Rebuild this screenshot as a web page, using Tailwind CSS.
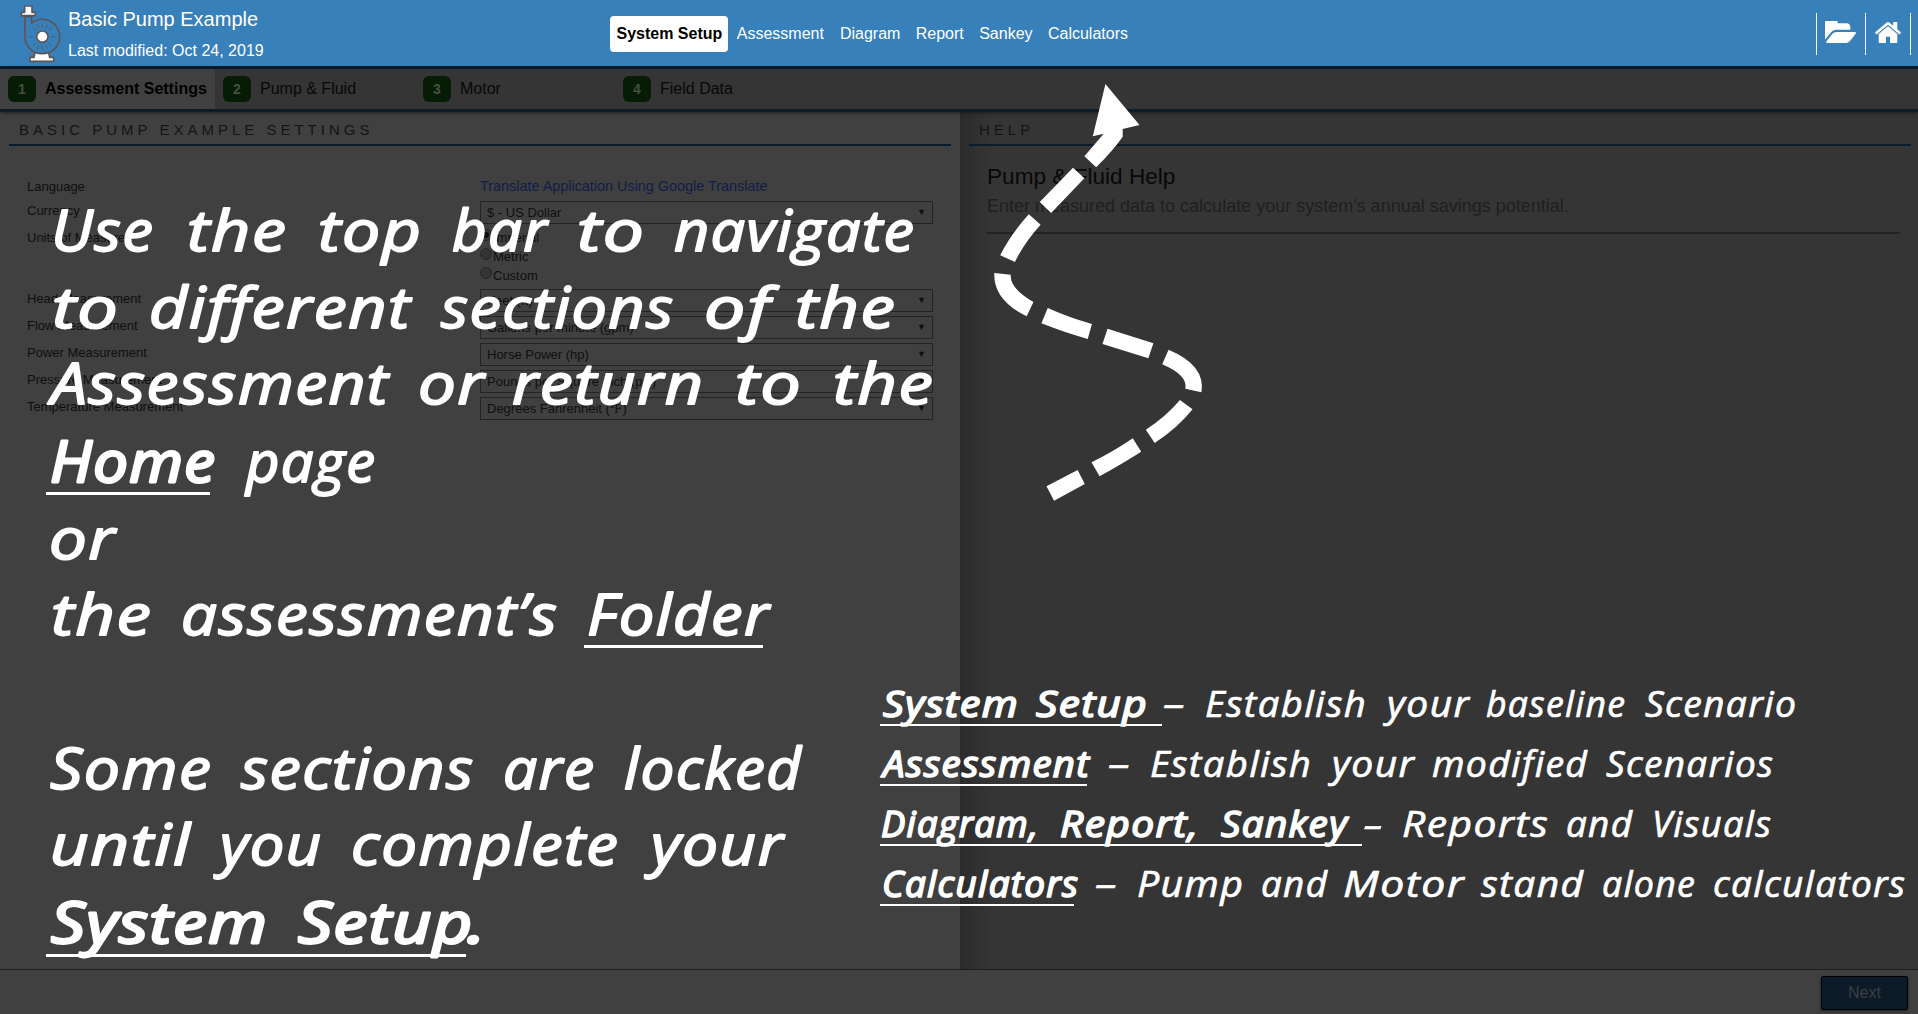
<!DOCTYPE html>
<html lang="en">
<head>
<meta charset="utf-8">
<title>Basic Pump Example</title>
<script src="https://cdn.jsdelivr.net/npm/@tailwindcss/browser@4"></script>
</head>
<body class="bg-[#404040] overflow-hidden">
<div class="relative flex h-[1014px] w-[1918px] flex-col overflow-hidden font-['Liberation_Sans',Arial,sans-serif] text-black">

  <!-- Top bar -->
  <header class="flex h-[69px] shrink-0 border-b-[3px] border-[#0d1c29] bg-[#3880b9] text-white">
    <div class="flex w-[610px] pl-[20px] pt-[4px]">
      <svg class="h-[59px] w-[42px]" viewBox="60 12 126 177" fill="none" stroke="#5b5557" stroke-width="5" stroke-linejoin="round">
        <path d="M75 50V108A52 52 0 1 0 95 69V50Z"/>
        <path fill="#fff" d="M74 18H96V37H106V47H64V37H74Z"/>
        <path fill="#fff" d="M105 158Q127 164 146 158L149 172H161V184H90V172H102Z"/>
        <circle cx="127" cy="110" r="17" fill="#fff"/>
        <path stroke-width="2.5" d="M127 72V84M127 137V149M88 110H100M153 110H165M99 82L108 91M146 129L155 138M155 82L146 91M108 129L99 138M112 74L116 85M142 74L138 85M112 146L116 135M142 146L138 135"/>
      </svg>
      <div class="flex flex-col pl-[6px]">
        <div class="text-[20px] leading-[30px]">Basic Pump Example</div>
        <div class="pt-[7px] text-[16px] leading-[20px]">Last modified: Oct 24, 2019</div>
      </div>
    </div>
    <nav class="mt-[16px] flex h-[36px] gap-px text-[16px] leading-[23px] whitespace-nowrap">
      <div class="w-[118px] rounded-[4px] bg-white pl-[6.5px] pt-[6px] font-bold text-black">System Setup</div>
      <div class="px-[7.8px] pt-[6px]">Assessment</div>
      <div class="px-[7.2px] pt-[6px]">Diagram</div>
      <div class="px-[7.2px] pt-[6px]">Report</div>
      <div class="px-[7.2px] pt-[6px]">Sankey</div>
      <div class="px-[7.2px] pt-[6px]">Calculators</div>
    </nav>
    <div class="mt-[13px] mr-[7px] ml-auto flex h-[42px] border-r border-white">
      <div class="w-[49px] border-l border-white pt-[8px] pl-[8px]">
        <svg class="h-[22px] w-[31px]" viewBox="0 256 1880 1280" preserveAspectRatio="none" fill="#fff"><path d="M1879 952q0 31-31 66l-336 396q-43 51-120.5 86.5t-143.5 35.5h-1088q-34 0-60.5-13t-26.5-43q0-31 31-66l336-396q43-51 120.5-86.5t143.5-35.5h1088q34 0 60.5 13t26.5 43zm-343-344v160h-832q-94 0-197 47.5t-164 119.5l-337 396-5 6q0-4-.5-12.5t-.5-12.5v-960q0-92 66-158t158-66h320q92 0 158 66t66 158v32h544q92 0 158 66t66 158z"/></svg>
      </div>
      <div class="w-[45px] border-l border-white pt-[9px] pl-[9px]">
        <svg class="h-[21px] w-[26px]" viewBox="89 253 1614 1283" preserveAspectRatio="none" fill="#fff"><path d="M1472 992v480q0 26-19 45t-45 19h-384v-384h-256v384h-384q-26 0-45-19t-19-45v-480q0-1 .5-3t.5-3l575-474 575 474q1 2 1 6zm223-69l-62 74q-8 9-21 11h-3q-13 0-21-7l-692-577-692 577q-12 8-24 7-13-2-21-11l-62-74q-8-10-7-23.5t11-21.5l719-599q32-26 76-26t76 26l244 204v-195q0-14 9-23t23-9h192q14 0 23 9t9 23v408l219 182q10 8 11 21.5t-7 23.5z"/></svg>
      </div>
    </div>
  </header>

  <!-- Setup steps -->
  <div class="z-10 flex h-[43px] shrink-0 border-b-[3px] border-[#0d1c29] bg-[#353535] text-[16px] leading-[40px] text-[#080808] shadow-[0_1px_4px_rgba(0,0,0,0.5)]">
    <div class="flex w-[215px] bg-[#404040] pl-[8px] font-bold text-black"><div class="mt-[7px] mr-[9px] h-[26px] w-[28px] rounded-[6px] bg-[#061c05] text-center text-[14px] leading-[27px] font-bold text-[#46503f]">1</div><div>Assessment Settings</div></div>
    <div class="flex w-[200px] pl-[8px]"><div class="mt-[7px] mr-[9px] h-[26px] w-[28px] rounded-[6px] bg-[#061c05] text-center text-[14px] leading-[27px] font-bold text-[#46503f]">2</div><div>Pump &amp; Fluid</div></div>
    <div class="flex w-[200px] pl-[8px]"><div class="mt-[7px] mr-[9px] h-[26px] w-[28px] rounded-[6px] bg-[#061c05] text-center text-[14px] leading-[27px] font-bold text-[#46503f]">3</div><div>Motor</div></div>
    <div class="flex w-[200px] pl-[8px]"><div class="mt-[7px] mr-[9px] h-[26px] w-[28px] rounded-[6px] bg-[#061c05] text-center text-[14px] leading-[27px] font-bold text-[#46503f]">4</div><div>Field Data</div></div>
  </div>

  <!-- Panels -->
  <main class="flex min-h-0 flex-1">
    <section class="w-[960px] bg-[#404040] pl-[9px]">
      <div class="h-[34px] w-[942px] border-b-2 border-[#0d1c29] pl-[10px] pt-[8px] text-[15px] leading-[20px] tracking-[4px] text-[#151515]">BASIC PUMP EXAMPLE SETTINGS</div>
      <div class="flex flex-col pl-[18px] pt-[28px] text-[13px] leading-[15px] text-[#0f0f0f]">
        <div class="flex h-[25px]"><div class="w-[453px] pt-[5px]">Language</div><div class="pt-[5px] text-[14.4px] text-[#101e4a]">Translate Application Using Google Translate</div></div>
        <div class="flex h-[27px] pt-[2px]"><div class="w-[453px] pt-[2px]">Currency</div><div class="flex h-[23px] w-[453px] justify-between border border-[#242424] pt-[3px] pr-[6px] pl-[6px]">$ - US Dollar<span class="text-[9px]">▼</span></div></div>
        <div class="flex h-[61px]"><div class="w-[453px] pt-[4px]">Units of Measure</div>
          <div class="flex flex-col pt-[2px] leading-[19px]">
            <div class="flex h-[19px] gap-px"><span class="mt-[1px] flex size-[12px] items-center justify-center rounded-full border border-[#262626] bg-[#383838]"><span class="size-[6px] rounded-full bg-[#0c0c0c]"></span></span>Imperial</div>
            <div class="flex h-[19px] gap-px"><span class="mt-[1px] size-[12px] rounded-full border border-[#262626] bg-[#343434]"></span>Metric</div>
            <div class="flex h-[19px] gap-px"><span class="mt-[1px] size-[12px] rounded-full border border-[#262626] bg-[#343434]"></span>Custom</div>
          </div></div>
        <div class="flex h-[27px] pt-[2px]"><div class="w-[453px] pt-[2px]">Head Measurement</div><div class="flex h-[23px] w-[453px] justify-between border border-[#242424] pt-[3px] pr-[6px] pl-[6px]">Feet (ft)<span class="text-[9px]">▼</span></div></div>
        <div class="flex h-[27px] pt-[2px]"><div class="w-[453px] pt-[2px]">Flow Measurement</div><div class="flex h-[23px] w-[453px] justify-between border border-[#242424] pt-[3px] pr-[6px] pl-[6px]">Gallons per minute (gpm)<span class="text-[9px]">▼</span></div></div>
        <div class="flex h-[27px] pt-[2px]"><div class="w-[453px] pt-[2px]">Power Measurement</div><div class="flex h-[23px] w-[453px] justify-between border border-[#242424] pt-[3px] pr-[6px] pl-[6px]">Horse Power (hp)<span class="text-[9px]">▼</span></div></div>
        <div class="flex h-[27px] pt-[2px]"><div class="w-[453px] pt-[2px]">Pressure Measurement</div><div class="flex h-[23px] w-[453px] justify-between border border-[#242424] pt-[3px] pr-[6px] pl-[6px]">Pounds per Square Inch (psi)<span class="text-[9px]">▼</span></div></div>
        <div class="flex h-[27px] pt-[2px]"><div class="w-[453px] pt-[2px]">Temperature Measurement</div><div class="flex h-[23px] w-[453px] justify-between border border-[#242424] pt-[3px] pr-[6px] pl-[6px]"><span>Degrees Fahrenheit (<span class="font-['DejaVu_Serif','Liberation_Serif',serif] text-[12px]">℉</span>)</span><span class="text-[9px]">▼</span></div></div>
      </div>
    </section>
    <section class="w-[958px] bg-[#353535] bg-linear-to-r from-[#2b2b2b] from-0% via-[#303030] via-[1.5%] to-[#353535] to-[3.5%] pl-[9px]">
      <div class="h-[34px] w-[942px] border-b-2 border-[#0d1c29] pl-[10px] pt-[8px] text-[15px] leading-[20px] tracking-[4px] text-[#151515]">HELP</div>
      <div class="pl-[18px]">
        <div class="pt-[17px] text-[22.6px] leading-[28px] text-[#080808]">Pump &amp; Fluid Help</div>
        <div class="w-[913px] border-b-2 border-[#222] pb-[15px] pt-[4px] text-[18px] leading-[22px] text-[#1e2021]">Enter measured data to calculate your system's annual savings potential.</div>
      </div>
    </section>
  </main>

  <!-- Footer -->
  <footer class="flex h-[45px] shrink-0 justify-end border-t border-[#1c1c1c] bg-[#404040] pr-[10px] pt-[6px]">
    <div class="h-[34px] w-[87px] rounded-[2px] border border-black bg-[#0d1a27] text-center text-[16px] leading-[31px] text-[#3c4043] shadow-[0_1px_3px_rgba(0,0,0,0.5)]">Next</div>
  </footer>

  <!-- Dashed arrow -->
  <svg class="absolute left-[940px] top-[70px] z-20 h-[440px] w-[660px]" viewBox="0 0 1568 1320" preserveAspectRatio="none" fill="#fff">
    <path d="M393 42L474 165L434 177V200Q412 240 371 292L343 259L389 191L363 199Z"/>
    <path d="M316 293L343 325L264 429L237 396Z"/>
    <path d="M211 433L239 464Q200 518 178 576L143 556Q166 496 211 433Z"/>
    <path d="M129 609L168 614Q166 656 222 696L206 739Q126 689 129 609Z"/>
    <path d="M256 714Q305 742 361 762L351 807Q292 786 241 760Z"/>
    <path d="M398 776L507 820L495 865L386 822Z"/>
    <path d="M543 839Q632 886 621 967L583 956Q589 916 528 883Z"/>
    <path d="M570 990L600 1018Q564 1075 510 1119L489 1079Q536 1041 570 990Z"/>
    <path d="M458 1105L478 1145Q433 1181 379 1219L360 1177Q412 1145 458 1105Z"/>
    <path d="M327 1200L344 1242L271 1292L253 1249Z"/>
  </svg>

  <!-- Handwritten notes -->
  <svg class="absolute left-0 top-0 z-20 h-[1014px] w-[1918px] font-['Open_Sans','Noto_Sans',sans-serif] tracking-[0.08em] italic" viewBox="0 0 1918 1014" fill="#fff" stroke="#fff" stroke-linejoin="round" id="notes"></svg>
</div>
<script>
// Each note line: [baseline, size, [word, left, right, bold?], ...]
const lines = [
 [251,57,["Use",51,151],["the",187,284],["top",318,419],["bar",452,545],["to",577,642],["navigate",674,912]],
 [328,57,["to",52,116],["different",149,408],["sections",441,671],["of",704,768],["the",795,893]],
 [404,57,["Assessment",51,386],["or",418,482],["return",512,701],["to",735,799],["the",833,931]],
 [482,57,["Home",50,213,1],["page",246,373]],
 [559,57,["or",49,113]],
 [635,57,["the",51,149],["assessment’s",181,555],["Folder",587,767]],
 [789,57,["Some",50,209],["sections",241,471],["are",503,592],["locked",624,799]],
 [865,57,["until",50,188],["you",220,319],["complete",351,616],["your",651,781]],
 [943,57,["System",51,265,1],["Setup",298,470,1],[".",467,484,1]],
 [717,37,["System",883,1017,1],["Setup",1036,1146,1],["–",1163,1184],["Establish",1205,1365],["your",1387,1468],["baseline",1486,1624],["Scenario",1645,1795]],
 [777,37,["Assessment",883,1088,1],["–",1108,1129],["Establish",1150,1310],["your",1332,1413],["modified",1432,1586],["Scenarios",1606,1772]],
 [837,37,["Diagram,",881,1037,1],["Report,",1060,1197,1],["Sankey",1221,1346,1],["-",1363,1383],["Reports",1402,1547],["and",1566,1631],["Visuals",1652,1770]],
 [897,37,["Calculators",882,1077,1],["–",1095,1116],["Pump",1137,1242],["and",1261,1326],["Motor",1343,1463],["stand",1481,1582],["alone",1602,1694],["calculators",1713,1904]]
];
// Underlines: [x, y, width, height]
const rules = [[46,492,164,3],[584,645,179,3],[46,954,420,3],[880,724,282,2],[880,784,207,2],[880,844,482,2],[880,904,194,2]];
const notes = document.getElementById("notes");
const add = (parent, tag, attrs) => {
  const el = document.createElementNS("http://www.w3.org/2000/svg", tag);
  for (const k in attrs) el.setAttribute(k, attrs[k]);
  return parent.appendChild(el);
};
// Words are stretched to their handwritten width; a round stroke softens the letter ends.
for (const [y, size, ...words] of lines) {
  for (const [word, l, r, bold] of words) {
    const big = size > 40;
    add(notes, "text", {
      x: l, y, "font-size": size, textLength: r - l + size * 0.06, lengthAdjust: "spacingAndGlyphs",
      "font-weight": bold ? 500 : 400, "stroke-width": (big ? 1.8 : 0.7) + (bold ? 1 : 0)
    }).textContent = word;
  }
}
for (const [x, y, width, height] of rules) add(notes, "rect", { x, y, width, height, stroke: "none" });
</script>
</body>
</html>
